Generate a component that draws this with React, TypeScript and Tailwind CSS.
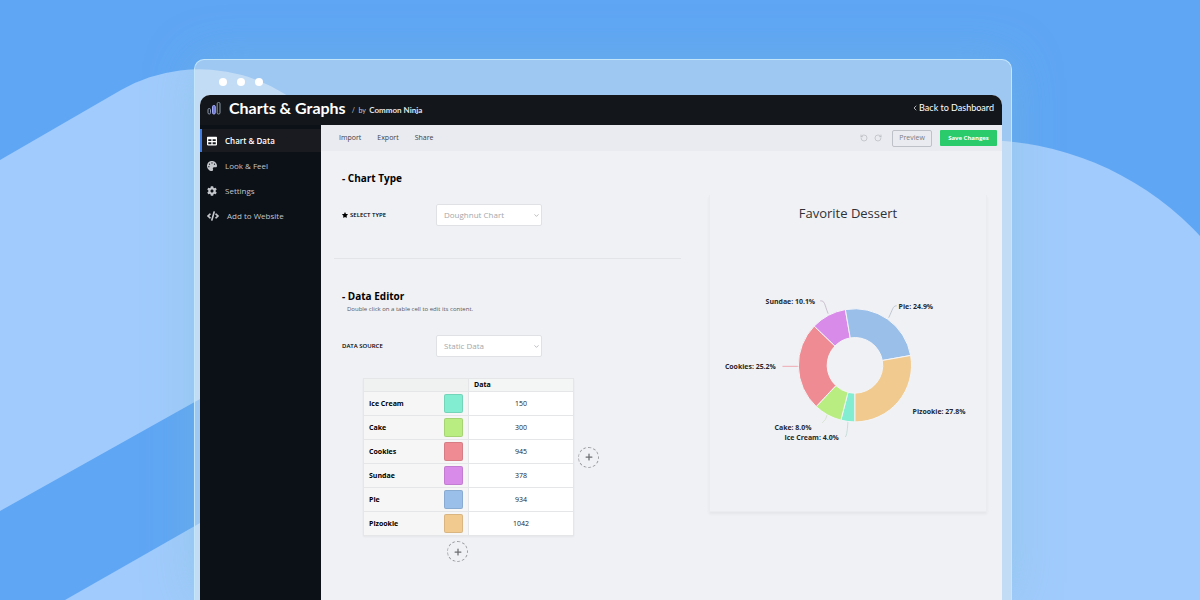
import { ChevronDown, ChevronLeft, Plus, RotateCcw, RotateCw } from "lucide-react";
import { FaCode, FaCog, FaPalette, FaStar, FaTable } from "react-icons/fa";

const rows = [
  { name: "Ice Cream", value: 150, color: "#82edd0" },
  { name: "Cake", value: 300, color: "#b9ed82" },
  { name: "Cookies", value: 945, color: "#ee8b93" },
  { name: "Sundae", value: 378, color: "#d98be9" },
  { name: "Pie", value: 934, color: "#9abfe9" },
  { name: "Pizookie", value: 1042, color: "#f1ca90" },
];

const labels = [
  { text: "Ice Cream: 4.0%", x: 75, y: 165 },
  { text: "Cake: 8.0%", x: 65, y: 155 },
  { text: "Cookies: 25.2%", x: 15, y: 94 },
  { text: "Sundae: 10.1%", x: 56, y: 28 },
  { text: "Pie: 24.9%", x: 190, y: 33 },
  { text: "Pizookie: 27.8%", x: 204, y: 139 },
];

const menu = [
  { label: "Chart & Data", icon: FaTable, active: true },
  { label: "Look & Feel", icon: FaPalette },
  { label: "Settings", icon: FaCog },
  { label: "Add to Website", icon: FaCode },
];

const CX = 146;
const CY = 90;

function point(radius: number, angle: number) {
  return `${CX + radius * Math.sin(angle)} ${CY - radius * Math.cos(angle)}`;
}

function Doughnut() {
  const total = rows.reduce((sum, row) => sum + row.value, 0);
  let angle = Math.PI;
  const slices = rows.map((row) => {
    const start = angle;
    const end = start + (row.value / total) * Math.PI * 2;
    angle = end;
    return {
      color: row.color,
      d: `M${point(57, start)}A57 57 0 0 1 ${point(57, end)}L${point(28, end)}A28 28 0 0 0 ${point(28, start)}Z`,
    };
  });

  return (
    <svg viewBox="0 0 278 200" className="block w-full" role="img" aria-label="Favorite Dessert doughnut chart">
      <g fill="none" strokeWidth="0.7">
        <path d="M111 25C116 25 115 28 119 38" stroke="#b9a9be" />
        <path d="M188 30C184 30 184 34 180 42" stroke="#a9b4c2" />
        <path d="M73 91H90" stroke="#ee8b93" />
        <path d="M113 148Q117 145 118 140" stroke="#cfdcc6" />
        <path d="M136 162Q138 163 139 146" stroke="#b5d5cf" />
      </g>
      {slices.map((slice) => (
        <path key={slice.color} d={slice.d} fill={slice.color} stroke="#f4f5f7" strokeWidth="1" />
      ))}
      {labels.map((label) => (
        <text key={label.text} x={label.x} y={label.y} className="fill-[#25272b] text-[7px] font-bold">
          {label.text}
        </text>
      ))}
    </svg>
  );
}

function Backdrop() {
  return (
    <svg
      viewBox="0 0 1200 600"
      preserveAspectRatio="xMidYMid slice"
      className="absolute inset-0 h-full w-full"
      aria-hidden="true"
    >
      <rect width="1200" height="600" fill="#5fa6f4" />
      <g fill="#a0cbfc">
        <path d="M0 160L121 90A159 159 0 0 1 278 367L200 399L0 511Z" />
        <path d="M65 600L400 409V600Z" />
        <circle cx="980" cy="440" r="300" />
        <path d="M900 440H1280V600H900Z" />
      </g>
    </svg>
  );
}

function Logo() {
  return (
    <svg viewBox="0 0 14 14" className="h-3.5 w-3.5" fill="none" strokeWidth="1" aria-hidden="true">
      <rect x="1" y="7.5" width="2.5" height="5.5" rx="1.2" stroke="#8b98ad" />
      <rect x="5.5" y="4.5" width="2.8" height="8.5" rx="1.2" stroke="#a3abf5" fill="#6f78d8" />
      <rect x="10.2" y="1.5" width="2.8" height="11.5" rx="1.2" stroke="#8b9aa5" />
    </svg>
  );
}

function Select({ id, value }: { id: string; value: string }) {
  return (
    <div className="relative w-[106px]">
      <select
        id={id}
        className="block h-[22px] w-full appearance-none rounded-xs border border-[#dfe1e4] bg-white pl-[7px] text-[8px] text-[#a5a7aa]"
      >
        <option>{value}</option>
      </select>
      <ChevronDown className="pointer-events-none absolute top-2 right-0.5 h-[7px] w-[7px] text-[#8f9194]" />
    </div>
  );
}

function AddButton({ label }: { label: string }) {
  return (
    <button
      aria-label={label}
      className="flex h-[21px] w-[21px] shrink-0 items-center justify-center rounded-full border border-dashed border-[#9b9da1] text-[#6b6d70]"
    >
      <Plus className="h-2.5 w-2.5" strokeWidth={3} />
    </button>
  );
}

function DataTable() {
  return (
    <table className="w-[211px] table-fixed border-collapse bg-white text-[7px] leading-3 shadow-xs">
      <thead>
        <tr className="h-[13px] bg-[#f4f5f5] text-left">
          <td className="w-[105px] border border-[#e5e6e7] bg-[#f0f1f1]" />
          <th scope="col" className="border border-[#e5e6e7] pl-[5px] font-bold">Data</th>
        </tr>
      </thead>
      <tbody>
        {rows.map((row) => (
          <tr key={row.name} className="h-6">
            <th scope="row" className="border border-[#e5e6e7] bg-[#f6f6f6] p-0 text-left font-bold">
              <div className="flex items-center justify-between pr-[5px] pl-[5px]">
                {row.name}
                <button
                  aria-label={`${row.name} color`}
                  className="h-[19px] w-[19px] rounded-xs border border-black/10"
                  style={{ backgroundColor: row.color }}
                />
              </div>
            </th>
            <td className="border border-[#e5e6e7] p-0 text-center text-[#222]">{row.value}</td>
          </tr>
        ))}
      </tbody>
    </table>
  );
}

function Sidebar() {
  return (
    <nav className="w-[121px] shrink-0 bg-[#0c1017] pt-1">
      {menu.map((item) => (
        <a
          key={item.label}
          href="#"
          className={
            item.active
              ? "mb-0.5 flex h-[23px] items-center border-l-2 border-[#3f7be0] bg-[#191b20] pl-[5px] text-[8px] font-semibold text-white"
              : "mb-0.5 flex h-[23px] items-center border-l-2 border-transparent pl-[5px] text-[8px] text-[#c3c6ca]"
          }
        >
          <item.icon className={item.icon === FaCode ? "mr-2 h-3 w-3" : "mr-2 h-2.5 w-2.5"} />
          {item.label}
        </a>
      ))}
    </nav>
  );
}

function Toolbar() {
  return (
    <div className="flex h-[26px] items-center bg-[#e9ebf0] pr-[5px] pl-[18px] text-[7px] text-[#3e4146]">
      <div className="flex flex-1 gap-4">
        <button>Import</button>
        <button>Export</button>
        <button>Share</button>
      </div>
      <button aria-label="Undo" className="mr-1.5 text-[#b4b7bc]">
        <RotateCcw className="h-2 w-2" />
      </button>
      <button aria-label="Redo" className="mr-2.5 text-[#b4b7bc]">
        <RotateCw className="h-2 w-2" />
      </button>
      <button className="mr-2 h-[17px] w-10 rounded-xs border border-[#bfc1c8] text-[#7a7d84]">Preview</button>
      <button className="h-4 w-[57px] rounded-[1px] bg-[#2bcb6c] text-[6px] font-bold text-white">Save Changes</button>
    </div>
  );
}

function Editor() {
  return (
    <div className="min-w-0 flex-1 text-black">
      <section className="border-b border-[#e2e4e8] pb-8 pl-2">
        <h2 className="text-[10px] leading-[14px] font-bold">- Chart Type</h2>
        <div className="mt-[19px] flex items-center">
          <label htmlFor="chart-type" className="flex w-[94px] items-center gap-0.5 text-[6px] font-semibold">
            <FaStar className="h-1.5 w-1.5" />
            SELECT TYPE
          </label>
          <Select id="chart-type" value="Doughnut Chart" />
        </div>
      </section>
      <section className="pt-[30px] pl-2">
        <h2 className="text-[10px] leading-[14px] font-bold">- Data Editor</h2>
        <p className="pl-[5px] text-[6px] leading-3 text-[#55585d]">Double click on a table cell to edit its content.</p>
        <div className="mt-5 flex items-center">
          <label htmlFor="data-source" className="w-[94px] text-[6px] font-semibold">DATA SOURCE</label>
          <Select id="data-source" value="Static Data" />
        </div>
        <div className="mt-[21px] ml-[21px]">
          <div className="flex items-center gap-1">
            <DataTable />
            <AddButton label="Add column" />
          </div>
          <div className="mt-[5px] w-[190px] pl-[84px]">
            <AddButton label="Add row" />
          </div>
        </div>
      </section>
    </div>
  );
}

export default function App() {
  return (
    <div className="relative flex min-h-screen overflow-hidden bg-[#5fa6f4] pt-[59px] pr-[188px] pl-[194px] font-['Open_Sans',sans-serif]">
      <Backdrop />
      <main className="relative flex flex-1 flex-col rounded-t-[10px] border border-b-0 border-[#c3e6fb] bg-[#eaf2f0]/45 pr-[9px] pl-[5px] shadow-[0_0_50px_rgba(125,190,205,0.35)]">
        <div className="flex h-[35px] items-center gap-2.5 pt-2 pl-[19px]">
          <span className="h-2 w-2 rounded-full bg-white" />
          <span className="h-2 w-2 rounded-full bg-white" />
          <span className="h-2 w-2 rounded-full bg-white" />
        </div>
        <div className="flex flex-1 flex-col overflow-hidden rounded-t-[10px] bg-[#f0f1f5]">
          <header className="flex h-[30px] items-center bg-[#13171b] pr-2 pb-1 pl-[7px] font-[Lato,sans-serif] text-white">
            <Logo />
            <h1 className="ml-2 text-[16px] leading-5 font-bold">Charts &amp; Graphs</h1>
            <p className="ml-1.5 flex-1 pt-1 text-[7px] text-[#c9cbce]">
              / &nbsp;by&nbsp; <a href="#" className="text-[8px] font-bold text-[#e4e5e7]">Common Ninja</a>
            </p>
            <a href="#" className="flex items-center text-[9px]">
              <ChevronLeft className="h-2 w-2" />
              Back to Dashboard
            </a>
          </header>
          <div className="flex flex-1">
            <Sidebar />
            <div className="flex min-w-0 flex-1 flex-col">
              <Toolbar />
              <div className="flex flex-1 items-start gap-7 pt-5 pr-[15px] pl-[13px]">
                <Editor />
                <section className="mt-6 min-h-[317px] w-[278px] shrink-0 border border-t-0 border-[#eaecf0] shadow-[0_2px_3px_rgba(0,0,0,0.05)]">
                  <h2 className="pt-2.5 text-center text-[13px] leading-4 text-[#2f3237]">Favorite Dessert</h2>
                  <div className="pt-[55px]">
                    <Doughnut />
                  </div>
                </section>
              </div>
            </div>
          </div>
        </div>
      </main>
    </div>
  );
}
